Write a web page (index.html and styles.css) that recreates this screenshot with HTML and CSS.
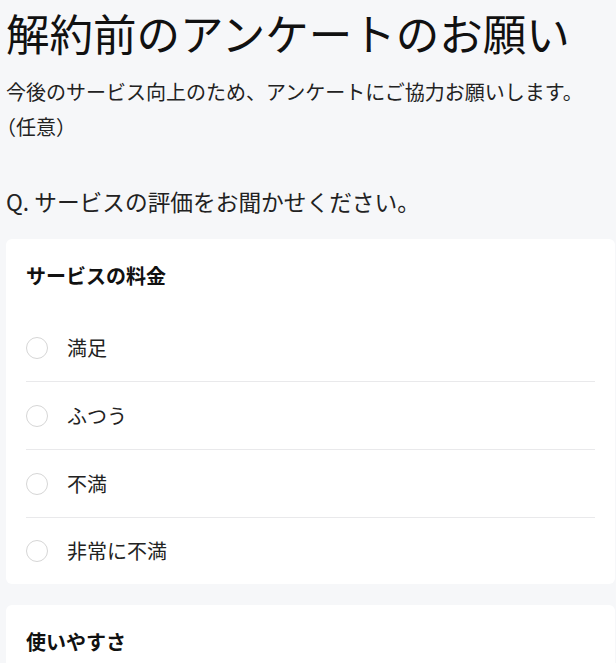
FILE: index.html
```html
<!DOCTYPE html>
<html lang="ja">
<head>
<meta charset="utf-8">
<link rel="stylesheet" href="styles.css">
</head>
<body>
<main class="page">
  <h1 class="title">解約前のアンケートのお願い</h1>
  <p class="lead">今後のサービス向上のため、アンケートにご協力お願いします。<span class="nowrap">（任意）</span></p>
  <h2 class="question">Q. サービスの評価をお聞かせください。</h2>

  <section class="card">
    <h3 class="card-title">サービスの料金</h3>
    <ul class="options">
      <li class="option"><span class="radio"></span><span class="label">満足</span></li>
      <li class="option"><span class="radio"></span><span class="label">ふつう</span></li>
      <li class="option"><span class="radio"></span><span class="label">不満</span></li>
      <li class="option"><span class="radio"></span><span class="label">非常に不満</span></li>
    </ul>
  </section>

  <section class="card card-last">
    <h3 class="card-title">使いやすさ</h3>
  </section>
</main>
</body>
</html>
```

FILE: styles.css
```css
* { box-sizing: border-box; }
html, body {
  margin: 0;
  padding: 0;
  background: #f6f7f9;
}
body {
  font-family: "Noto Sans CJK JP", "Noto Sans", sans-serif;
  color: #1a1a1a;
}
.page {
  padding: 0 1px 0 6px;
}
.title {
  margin: 0;
  font-size: 43.5px;
  font-weight: 400;
  line-height: 66px;
  color: #111;
}
.lead {
  margin: 8px 0 0;
  font-size: 20px;
  line-height: 35px;
  color: #222;
}
.nowrap {
  white-space: nowrap;
}
.question {
  margin: 40px 0 0;
  font-size: 22.7px;
  font-weight: 400;
  line-height: 36px;
  color: #222;
}
.card {
  margin-top: 19px;
  background: #fff;
  border-radius: 6px;
  padding: 20px 20px 0;
}
.card + .card {
  margin-top: 21px;
}
.card-last {
  padding-bottom: 20px;
}
.card-title {
  margin: 0 0 21px;
  font-size: 20px;
  font-weight: 700;
  line-height: 34px;
  color: #111;
}
.card-last .card-title {
  margin-bottom: 0;
}
.options {
  list-style: none;
  margin: 0;
  padding: 0;
}
.option {
  display: flex;
  align-items: center;
  gap: 19px;
  height: 68px;
  border-bottom: 1px solid #e9e9eb;
}
.option:last-child {
  border-bottom: none;
  height: 66px;
}
.radio {
  width: 22px;
  height: 22px;
  border-radius: 50%;
  border: 1px solid #d6d6d6;
  background: #fff;
  flex: none;
}
.label {
  font-size: 20px;
  color: #222;
  line-height: 1;
}
```
